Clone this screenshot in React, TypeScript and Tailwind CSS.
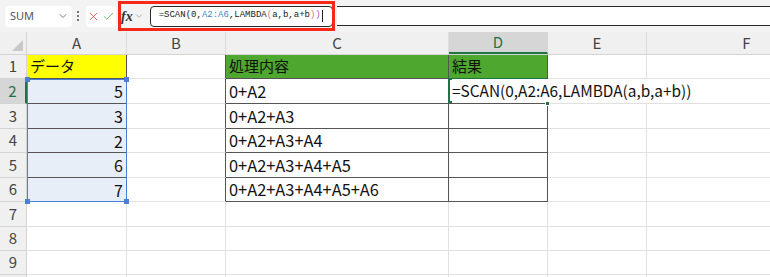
import { ChevronDown, X, Check } from 'lucide-react';

const cellFont = { fontFamily: '"Noto Sans CJK JP", "Noto Sans", sans-serif' };

const colWidths = ['w-[27px]', 'w-[100px]', 'w-[99px]', 'w-[223px]', 'w-[99px]', 'w-[99px]', 'w-[200px]'];
const rowHeights = ['h-[24px]', 'h-[25px]', 'h-[25px]', 'h-[24px]', 'h-[25px]', 'h-[24px]', 'h-[25px]', 'h-[24px]', 'h-[24px]', 'h-[24px]'];

const colC = ['処理内容', '0+A2', '0+A2+A3', '0+A2+A3+A4', '0+A2+A3+A4+A5', '0+A2+A3+A4+A5+A6'];
const colA = ['データ', '5', '3', '2', '6', '7'];

function FormulaBar() {
  return (
    <div className="relative h-[32px] bg-[#f3f3f3] flex items-center">
      <div className="ml-[5px] w-[67px] h-[21px] bg-white rounded-[3px] flex items-center justify-between pl-[5px] pr-[3px]">
        <span className="text-[11px] text-[#555]" style={{ fontFamily: '"Noto Sans", sans-serif' }}>SUM</span>
        <ChevronDown className="w-[12px] h-[12px] text-[#555]" strokeWidth={1.5} />
      </div>
      <div className="ml-[5px] flex flex-col gap-[2px]">
        <span className="block w-[2px] h-[2px] bg-[#777]" />
        <span className="block w-[2px] h-[2px] bg-[#777]" />
        <span className="block w-[2px] h-[2px] bg-[#777]" />
      </div>
      <div className="ml-[7px] w-[30px] h-[21px] bg-white rounded-[3px] flex items-center justify-center gap-[2px]">
        <X className="w-[13px] h-[13px] text-[#e0443a]" strokeWidth={1.5} />
        <Check className="w-[13px] h-[13px] text-[#4caf50]" strokeWidth={1.5} />
      </div>
      <div className="ml-[5px] flex items-center gap-[1px]">
        <span className="italic text-[14px] text-[#333] font-semibold" style={{ fontFamily: '"Liberation Serif", serif' }}>fx</span>
        <ChevronDown className="w-[10px] h-[10px] text-[#888]" strokeWidth={1.5} />
      </div>
      <div className="ml-[6px] w-[183px] h-[21px] bg-white border-[1.5px] border-[#2b2b2b] rounded-[4px] flex items-center pl-[8px]">
        <span className="text-[9px] text-[#222] whitespace-nowrap" style={{ fontFamily: '"Liberation Mono", monospace' }}>
          =SCAN(0,<span className="text-[#3b86c8]">A2:A6</span>,LAMBDA<span className="text-[#e0766a]">(</span>a,b,a+b<span className="text-[#e0766a]">)</span><span className="text-[#9a5fc0]">)</span>
        </span>
        <span className="ml-[1px] block w-[1px] h-[12px] bg-[#222]" />
      </div>
      <div className="ml-[4px] flex-1 h-[20px] bg-white border-y-[1.5px] border-[#2b2b2b]" />
      <div className="absolute left-[118px] top-[1px] w-[217px] h-[30px] border-[3px] border-[#f5281a]" />
    </div>
  );
}

function HeaderRow() {
  const letters = ['A', 'B', 'C', 'D', 'E', 'F'];
  return (
    <div className="flex h-[23px] bg-[#f0f0f0] border-b border-[#d4d4d4]">
      <div className={`${colWidths[0]} relative border-r border-[#d4d4d4] shrink-0`}>
        <div className="absolute right-[3px] bottom-[3px] w-0 h-0 border-l-[11px] border-l-transparent border-b-[11px] border-b-[#c8c8c8]" />
      </div>
      {letters.map((l, i) => (
        <div
          key={l}
          className={`${colWidths[i + 1]} shrink-0 flex items-center justify-center border-r text-[15px] ${
            l === 'D' ? 'bg-[#d6d6d6] text-[#217346] border-[#d4d4d4] border-b-2 border-b-[#217346]' : 'text-[#444] border-[#dcdcdc]'
          }`}
          style={cellFont}
        >
          {l}
        </div>
      ))}
    </div>
  );
}

function Row({ r }: { r: number }) {
  const inTable = r < 6;
  const rowNum = r + 1;
  const dark = 'border-[#555]';
  const grid = 'border-[#e1e1e1]';
  return (
    <div className={`flex ${rowHeights[r]}`}>
      <div
        className={`${colWidths[0]} shrink-0 flex items-center justify-center text-[15px] border-b ${
          rowNum === 2 ? 'bg-[#d6d6d6] text-[#217346] border-r-2 border-r-[#217346] border-b-[#d4d4d4]' : 'bg-[#f0f0f0] text-[#444] border-r border-[#d4d4d4]'
        }`}
        style={cellFont}
      >
        {rowNum < 10 ? rowNum : ''}
      </div>
      {/* A */}
      <div
        className={`${colWidths[1]} shrink-0 flex items-center px-[3px] text-[#111] border-b border-r ${
          inTable ? `${dark} ${r === 0 ? 'bg-[#ffff00] justify-start text-[15px]' : 'bg-[#e8eef8] justify-end text-[16px]'}` : grid
        }`}
        style={cellFont}
      >
        {inTable ? colA[r] : ''}
      </div>
      {/* B */}
      <div className={`${colWidths[2]} shrink-0 border-b ${grid} border-r ${inTable ? 'border-r-[#555]' : ''}`} />
      {/* C */}
      <div
        className={`${colWidths[3]} shrink-0 flex items-center px-[3px] text-[#111] border-b border-r ${
          inTable ? `${dark} ${r === 0 ? 'bg-[#4ea72e] text-[15px]' : 'bg-white text-[16.4px]'}` : grid
        }`}
        style={cellFont}
      >
        {inTable ? colC[r] : ''}
      </div>
      {/* D */}
      <div
        className={`${colWidths[4]} shrink-0 relative flex items-center px-[3px] text-[15px] text-[#111] border-b border-r ${
          inTable ? `${dark} ${r === 0 ? 'bg-[#4ea72e]' : 'bg-white'}` : grid
        }`}
        style={cellFont}
      >
        {r === 0 ? '結果' : ''}
        {r === 1 && (
          <>
            <div className="absolute left-[-1px] top-[-1px] w-[100px] h-[25px] border-2 border-[#217346] border-r-0 pointer-events-none" />
            <div className="absolute right-[-3px] bottom-[-3px] w-[5px] h-[5px] bg-[#217346] border border-white z-20" />
            <span className="absolute left-[3px] z-10 whitespace-nowrap bg-white pr-[2px] text-[15.4px]">=SCAN(0,A2:A6,LAMBDA(a,b,a+b))</span>
          </>
        )}
      </div>
      {/* E */}
      <div className={`${colWidths[5]} shrink-0 border-b border-r ${grid}`} />
      {/* F */}
      <div className={`${colWidths[6]} shrink-0 border-b border-r ${grid}`} />
    </div>
  );
}

function Selection() {
  return (
    <div className="absolute left-[27px] top-[79px] w-[100px] h-[123px] border-[1.5px] border-[#4a7fd6] pointer-events-none">
      <span className="absolute left-[-3px] top-[-3px] w-[5px] h-[5px] bg-[#4a7fd6]" />
      <span className="absolute right-[-3px] top-[-3px] w-[5px] h-[5px] bg-[#4a7fd6]" />
      <span className="absolute left-[-3px] bottom-[-3px] w-[5px] h-[5px] bg-[#4a7fd6]" />
      <span className="absolute right-[-3px] bottom-[-3px] w-[5px] h-[5px] bg-[#4a7fd6]" />
    </div>
  );
}

export default function App() {
  return (
    <div className="w-[770px] h-[277px] overflow-hidden bg-white relative">
      <FormulaBar />
      <HeaderRow />
      {Array.from({ length: 10 }).map((_, r) => (
        <Row key={r} r={r} />
      ))}
      <Selection />
    </div>
  );
}
